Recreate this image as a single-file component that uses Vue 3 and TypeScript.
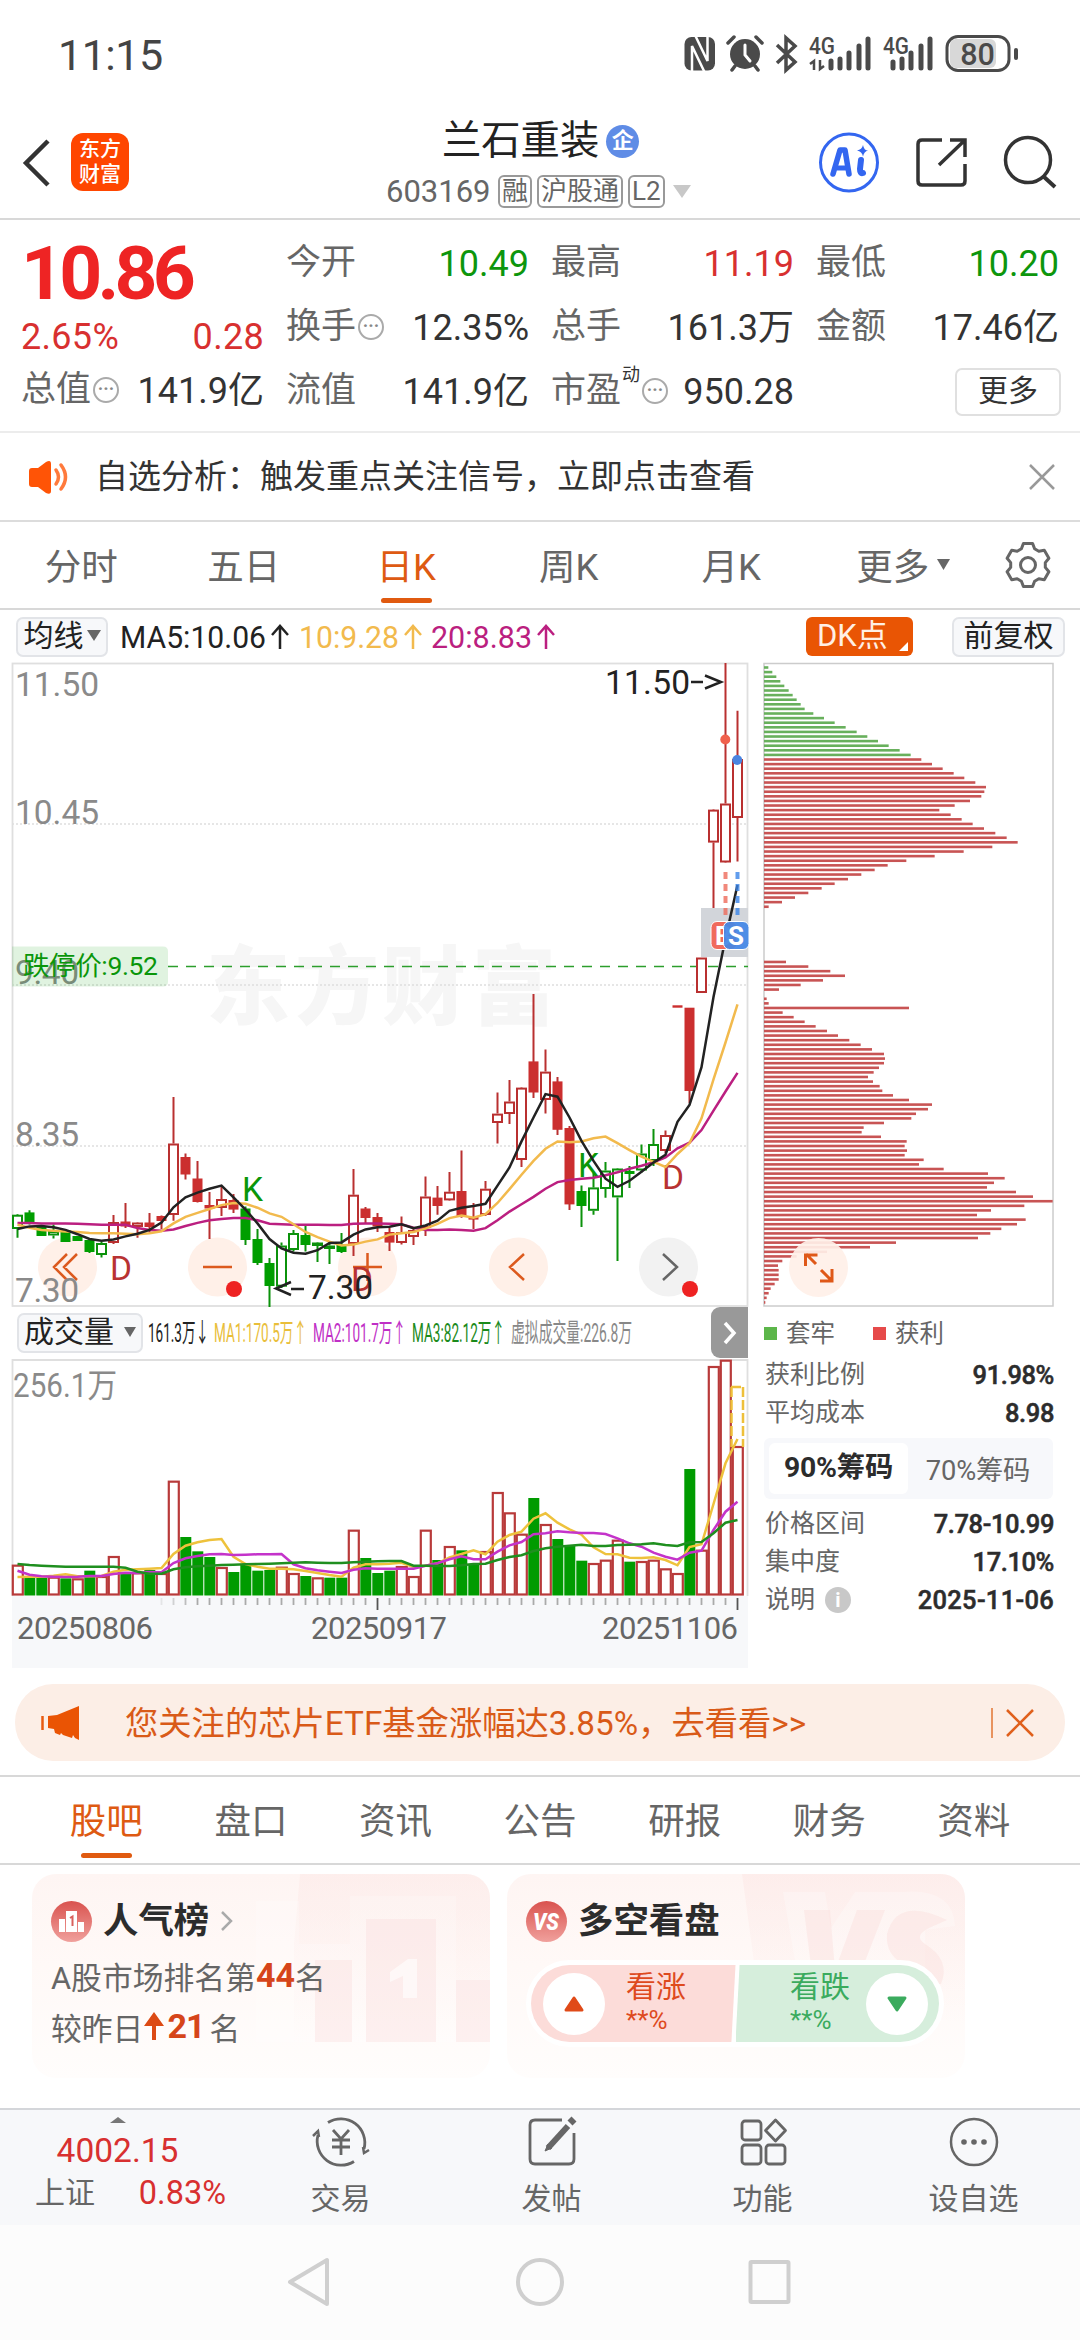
<script setup lang="ts">
type Candle = [number, number, number, number, string]

const pitch = 12
const cx = (i: number): number => 17.5 + i * pitch

// [high, body top, body bottom, low, style] — r/g colour, h hollow, f filled
const candles: Candle[] = [
  [1214, 1214.7, 1229, 1237.7, 'gh'], [1210.3, 1213.4, 1222.5, 1224.6, 'gf'], [1226, 1227, 1235, 1236, 'gf'],
  [1224.6, 1231, 1235.5, 1238.5, 'gh'], [1230, 1231, 1241, 1242, 'gf'], [1236, 1237, 1240, 1241, 'gf'],
  [1240, 1241, 1251, 1253, 'gf'], [1242, 1243, 1255, 1257.6, 'gh'], [1215, 1222, 1243, 1244, 'rh'],
  [1203, 1222.5, 1225.5, 1228, 'rf'], [1222, 1222.5, 1227, 1237.7, 'rh'], [1213, 1223.5, 1226, 1232.5, 'rf'],
  [1215.5, 1217, 1220, 1229, 'rf'], [1097, 1143.5, 1215, 1220.7, 'rh'], [1153.5, 1158, 1173.5, 1179.5, 'rf'],
  [1161, 1179.5, 1201, 1202.5, 'rf'], [1192, 1206, 1207.5, 1239, 'rf'], [1187, 1199, 1208, 1216, 'rh'],
  [1194, 1201, 1208.6, 1213, 'rf'], [1206.4, 1209.5, 1239, 1245, 'gf'], [1229, 1240, 1262, 1265, 'gf'],
  [1258, 1264, 1285, 1307, 'gf'], [1242.4, 1245.5, 1286.7, 1288, 'gh'], [1230, 1233, 1250, 1251.5, 'gh'],
  [1226, 1236, 1244, 1251.5, 'gf'], [1242, 1242.5, 1246, 1262, 'gh'], [1242, 1245.5, 1249, 1264, 'gh'],
  [1233, 1245.5, 1251, 1253, 'gf'], [1169, 1194.7, 1244, 1256, 'rh'], [1207, 1209.5, 1217, 1223, 'rf'],
  [1213, 1218, 1225.5, 1232, 'rf'], [1227.7, 1233, 1241.6, 1251, 'rf'], [1216.4, 1232, 1243, 1244.6, 'rh'],
  [1228, 1230, 1237, 1245, 'rh'], [1176.5, 1196.5, 1228, 1236, 'rh'], [1186, 1198.6, 1205, 1214.7, 'rf'],
  [1172, 1191.7, 1200.4, 1201, 'rh'], [1150.5, 1192, 1215, 1217.7, 'rf'], [1203, 1217.8, 1218.6, 1229, 'rf'],
  [1181, 1188.7, 1215, 1216, 'rh'], [1092.4, 1113.6, 1123, 1143.5, 'rh'], [1080, 1101.5, 1114, 1124, 'rh'],
  [1087, 1087.6, 1160, 1167, 'rh'], [994, 1062.4, 1091.5, 1098, 'rf'], [1049.4, 1071.6, 1100, 1113.6, 'rh'],
  [1077, 1082.4, 1128.8, 1135, 'rf'], [1126, 1129, 1203.4, 1210, 'rf'], [1185.6, 1192, 1205, 1227, 'gf'],
  [1172.6, 1187.4, 1210.8, 1214.7, 'gh'], [1162, 1170.5, 1189, 1197.8, 'gh'], [1168, 1168.5, 1197.4, 1261, 'gh'],
  [1166, 1172, 1173, 1188, 'gf'], [1144.5, 1153.5, 1170.5, 1172.6, 'gh'], [1129, 1144, 1161, 1166, 'gh'],
  [1130.5, 1135, 1151, 1153, 'rh'], [1006.5, 1006.3, 1006.7, 1006.5, 'rf'], [1008, 1008.7, 1090, 1103, 'rf'],
  [957.5, 957.5, 993, 993, 'rh'], [809, 809.6, 842.6, 908, 'rh'], [663, 803.5, 862.5, 863, 'rh'],
  [710.7, 759, 818, 861.6, 'rh'],
]

const priceY = (v: number): number => 650 + v * 0.4337
const volY = (v: number): number => 1300 + v / 3
const line = (values: number[], scale: (v: number) => number): string =>
  values.map((v, i) => `${cx(i)},${scale(v).toFixed(1)}`).join(' ')

const ma5 = [1335, 1329, 1328, 1331, 1337, 1347, 1358, 1362, 1359, 1352, 1346, 1337, 1320, 1285, 1262, 1251, 1242, 1235, 1262, 1290, 1322, 1358, 1380, 1390, 1392, 1384, 1367, 1366, 1348, 1336, 1331, 1330, 1324, 1333, 1327, 1316, 1293, 1286, 1282, 1277, 1235, 1193, 1133, 1078, 1024, 1030, 1078, 1132, 1178, 1219, 1238, 1224, 1203, 1182, 1164, 1088, 1049, 962, 800, 665, 542]
const ma10 = [1325, 1332, 1337, 1339, 1341, 1342, 1344, 1345, 1345, 1346, 1347, 1345, 1340, 1322, 1307, 1298, 1289, 1280, 1275, 1277, 1286, 1299, 1307, 1324, 1342, 1354, 1364, 1373, 1371, 1364, 1359, 1348, 1345, 1342, 1334, 1323, 1310, 1304, 1309, 1301, 1275, 1243, 1210, 1178, 1150, 1133, 1135, 1133, 1126, 1122, 1137, 1153, 1168, 1180, 1192, 1162, 1137, 1080, 990, 905, 817]
const ma20 = [1321, 1321, 1322, 1322, 1322, 1323, 1324, 1325, 1325, 1325, 1333, 1337, 1339, 1336, 1328, 1321, 1315, 1312, 1310, 1310, 1315, 1323, 1324, 1325, 1325, 1325, 1326, 1326, 1323, 1322, 1322, 1323, 1324, 1332, 1337, 1337, 1336, 1337, 1339, 1333, 1315, 1295, 1278, 1261, 1242, 1227, 1222, 1219, 1217, 1211, 1204, 1196, 1189, 1181, 1170, 1149, 1136, 1107, 1062, 1018, 975]

const volumeTops = [797, 830, 833, 833, 835, 838, 812, 831, 771, 822, 820, 810, 822, 545, 711, 754, 771, 804, 816, 792, 812, 810, 803, 822, 828, 835, 833, 833, 692, 774, 819, 812, 801, 831, 692, 780, 741, 751, 792, 756, 579, 640, 704, 594, 675, 717, 737, 782, 792, 782, 722, 785, 786, 782, 808, 822, 507, 752, 201, 182, 441]
const volumeSides = 'rggrgrgrrgrgrrgggrggggrrgrggrgggrrrgrggrrrrgrgggrrrgrrrrgrrrr'
const volumes = volumeTops.map((v, i) => ({ x: cx(i), y: volY(v), up: volumeSides[i] === 'r' }))
const vma1 = [831, 830, 830, 827, 823, 829, 829, 828, 815, 809, 808, 806, 804, 762, 737, 727, 720, 717, 770, 792, 800, 806, 806, 808, 813, 819, 825, 830, 803, 793, 793, 791, 788, 801, 797, 790, 772, 762, 751, 763, 725, 705, 695, 656, 640, 668, 688, 704, 742, 762, 763, 773, 774, 772, 780, 796, 741, 733, 612, 490, 417]
const vma2 = [812, 824, 829, 830, 831, 830, 828, 828, 822, 818, 819, 816, 817, 789, 775, 768, 763, 762, 765, 764, 763, 763, 762, 793, 805, 811, 815, 819, 809, 805, 806, 806, 806, 806, 797, 790, 778, 769, 778, 778, 755, 736, 726, 703, 700, 694, 697, 699, 699, 702, 715, 730, 740, 758, 770, 779, 758, 752, 690, 635, 605]
const vma3 = [792, 795, 797, 799, 800, 800, 800, 800, 800, 803, 815, 821, 821, 808, 802, 799, 797, 795, 794, 793, 792, 791, 790, 788, 787, 788, 789, 789, 787, 785, 784, 783, 783, 797, 797, 798, 798, 796, 792, 791, 780, 771, 766, 753, 745, 740, 737, 734, 738, 738, 735, 734, 733, 730, 735, 738, 727, 726, 700, 668, 660]
const ticks = Array.from({ length: 49 }, (_, k) => k + 12)

// cost distribution, top price first; the first 20 levels are trapped positions
const chipEnds = [
  55, 67, 79, 91, 103, 116, 128, 140, 152, 164, 190, 222, 254, 287, 320, 352, 384, 416, 449, 482,
  514, 546, 578, 611, 643, 676, 708, 703, 694, 660, 614, 568, 602, 635, 668, 702, 736, 770, 803, 727, 641, 554, 469, 413, 374, 334, 294, 254, 215, 175, 135, 96, 56,
  0, 0, 0, 0, 0, 0, 0, 0, 0, 0, 0, 108, 175, 241, 285, 219, 152, 87, 0, 50, 56, 477, 98, 131, 164, 197, 231, 264, 298, 332, 366,
  402, 405, 402, 387, 371, 354, 369, 389, 397, 429, 477, 546, 534, 498, 484, 402, 341, 335, 393, 470, 464, 471, 464, 521, 507, 581, 714, 764, 732, 711,
  798, 849, 908, 823, 723, 681, 827, 801, 754, 721, 684, 438, 360, 231, 140, 97, 84, 86, 86, 86, 74, 62, 56, 50, 46,
]
const chips = chipEnds
  .map((v, i) => ({ w: (v - 42) / 3, y: 666.2 + i * 4.601, free: i >= 20 }))
  .filter((c) => c.w > 0)

const gear = (() => {
  const pts: string[] = []
  for (let t = 0; t < 6; t++) {
    const spec: [number, number][] = [[-22, 17.5], [-12, 22], [12, 22], [22, 17.5]]
    for (const [d, r] of spec) {
      const a = ((t * 60 + d - 90) * Math.PI) / 180
      pts.push(`${(r * Math.cos(a)).toFixed(1)},${(r * Math.sin(a)).toFixed(1)}`)
    }
  }
  return pts.join(' ')
})()

const periods = ['分时', '五日', '日K', '周K', '月K']
const sections = ['股吧', '盘口', '资讯', '公告', '研报', '财务', '资料']
const priceLabels: [string, number][] = [['11.50', 695.5], ['10.45', 824], ['9.40', 984], ['8.35', 1145.5], ['7.30', 1302]]
const volLegend = [
  { t: '161.3万↓', x: 148, w: 61, c: '#222' },
  { t: 'MA1:170.5万↑', x: 214, w: 93, c: '#e9be3a' },
  { t: 'MA2:101.7万↑', x: 313, w: 93, c: '#c02fc6' },
  { t: 'MA3:82.12万↑', x: 412, w: 93, c: '#1b8a1b' },
  { t: '虚拟成交量:226.8万', x: 511, w: 121, c: '#888' },
]
</script>

<template>
  <div class="screen">
    <header class="status">
      <span class="clock">11:15</span>
      <svg class="status-icons" viewBox="680 30 340 46" width="340" height="46">
        <rect x="684.500" y="37" width="30.500" height="33.500" rx="7" fill="#4a4a4a" />
        <path d="M692 72V46l12.500 26M707.500 35v26L695 35" fill="none" stroke="#fff" stroke-width="2.500" />
        <circle cx="745" cy="54" r="15" fill="#4a4a4a" />
        <path d="M728 43l6-6M762 43l-6-6M735 66l-3 4M755 66l3 4" stroke="#4a4a4a" stroke-width="3.500" stroke-linecap="round" />
        <path d="M745 45v10l5 6" fill="none" stroke="#fff" stroke-width="3" stroke-linecap="round" />
        <path d="M777 45l18 17-9 8V38l9 8-18 17" fill="none" stroke="#4a4a4a" stroke-width="3.500" />
        <text x="809" y="54" font-size="23" font-weight="500" textLength="26" lengthAdjust="spacingAndGlyphs">4G</text>
        <text x="883" y="54" font-size="23" font-weight="500" textLength="26" lengthAdjust="spacingAndGlyphs">4G</text>
        <path d="M814 70v-9l-4 3M820 60v9l4-3" fill="none" stroke="#4a4a4a" stroke-width="2.500" />
        <path d="M831 68v-7M840 68V59M849 68V53M859 68V46M868 68V39M893 68v-6M902 68V59M911 68V53M921 68V46M930 68V39" stroke="#4a4a4a" stroke-width="5" stroke-linecap="round" />
        <rect x="950" y="39" width="46" height="29" rx="6" fill="#d8d8d8" />
        <rect x="947" y="36.500" width="62" height="34" rx="11" fill="none" stroke="#4a4a4a" stroke-width="3" />
        <text x="977.500" y="64.500" font-size="30.500" font-weight="500" text-anchor="middle">80</text>
        <path d="M1016 50v8" stroke="#4a4a4a" stroke-width="4" stroke-linecap="round" />
      </svg>
    </header>

    <section class="titlebar">
      <svg class="back" viewBox="0 0 28 48" width="28" height="48"><path d="M26 2L4 24l22 22" fill="none" stroke="#333" stroke-width="4.500" /></svg>
      <div class="logo"><span>东方</span><span>财富</span></div>
      <div class="title">
        <div class="name">兰石重装<span class="badge">企</span></div>
        <div class="code">
          <span class="num">603169</span><i>融</i><i>沪股通</i><i>L2</i>
          <svg width="18" height="13" viewBox="0 0 18 13"><path d="M0 0h18l-9 13z" fill="#c8c8c8" /></svg>
        </div>
      </div>
      <svg class="tools" viewBox="816 128 248 70" width="248" height="70">
        <circle cx="849" cy="162.500" r="28.500" fill="none" stroke="#3366f0" stroke-width="3" />
        <path d="M833 174l7-24h5l4 24" fill="none" stroke="#3366f0" stroke-width="5.500" stroke-linejoin="round" stroke-linecap="round" />
        <path d="M837 168h9" stroke="#3366f0" stroke-width="5" />
        <path d="M861 160l-1 9q0 5 3 4" fill="none" stroke="#3366f0" stroke-width="6" stroke-linecap="round" />
        <path d="M863 145q1 5.500 5 5.500-4 1-5 6-1-5-6-6 5-1 6-5.500z" fill="#3366f0" />
        <path d="M942 140h-20q-4 0-4 4v37q0 4 4 4h39q4 0 4-4v-17M950 140h15v17M965 140l-26 25" fill="none" stroke="#333" stroke-width="3.500" />
        <circle cx="1028" cy="160" r="22.500" fill="none" stroke="#333" stroke-width="3.500" />
        <path d="M1043 176l12 11" stroke="#333" stroke-width="4" />
      </svg>
    </section>

    <section class="quote">
      <div class="last">
        <b>10.86</b>
        <div class="pair red"><span>2.65%</span><span>0.28</span></div>
        <div class="cell"><label>总值</label><em>···</em><span>141.9亿</span></div>
      </div>
      <div class="col">
        <div class="cell"><label>今开</label><span class="green">10.49</span></div>
        <div class="cell"><label>换手</label><em>···</em><span>12.35%</span></div>
        <div class="cell"><label>流值</label><span>141.9亿</span></div>
      </div>
      <div class="col">
        <div class="cell"><label>最高</label><span class="red">11.19</span></div>
        <div class="cell"><label>总手</label><span>161.3万</span></div>
        <div class="cell"><label>市盈</label><sup>动</sup><em>···</em><span>950.28</span></div>
      </div>
      <div class="col">
        <div class="cell"><label>最低</label><span class="green">10.20</span></div>
        <div class="cell"><label>金额</label><span>17.46亿</span></div>
        <div class="cell"><button class="more">更多</button></div>
      </div>
    </section>

    <section class="notice">
      <svg width="40" height="34" viewBox="0 0 40 34">
        <path d="M0 11q0-3 3-3h6l8-6q5-3 5 2v27q0 4-5 2l-8-6H3q-3 0-3-3z" fill="#ff5406" />
        <path d="M27 10q5 7 0 14M32 5q9 12 0 24" fill="none" stroke="#ff7a3c" stroke-width="3.500" stroke-linecap="round" />
      </svg>
      <span>自选分析：触发重点关注信号，立即点击查看</span>
      <svg width="26" height="26" viewBox="0 0 26 26"><path d="M1 1l24 24M25 1L1 25" stroke="#999" stroke-width="2.500" /></svg>
    </section>

    <nav class="periods">
      <div v-for="p in periods" :key="p" class="tab" :class="{ on: p === '日K' }">{{ p }}</div>
      <div class="tab all">更多<svg width="13" height="11" viewBox="0 0 13 11"><path d="M0 0h13L6.500 11z" fill="#666" /></svg></div>
      <svg class="gear" viewBox="-24 -24 48 48" width="48" height="48">
        <polygon :points="gear" fill="none" stroke="#666" stroke-width="3" stroke-linejoin="round" />
        <circle r="7.500" fill="none" stroke="#666" stroke-width="3" />
      </svg>
    </nav>

    <section class="mabar">
      <div class="chipbtn">均线<svg width="14" height="11" viewBox="0 0 14 11"><path d="M0 0h14L7 11z" fill="#666" /></svg></div>
      <svg class="malegend" viewBox="118 612 445 48" width="445" height="48">
        <g font-size="31">
          <text x="120" y="646.500" fill="#222" textLength="146" lengthAdjust="spacingAndGlyphs">MA5:10.06</text>
          <text x="299" y="646.500" fill="#f2ba4d" textLength="100" lengthAdjust="spacingAndGlyphs">10:9.28</text>
          <text x="431" y="646.500" fill="#bb1f80" textLength="101" lengthAdjust="spacingAndGlyphs">20:8.83</text>
        </g>
        <g fill="none" stroke-width="2.500">
          <path d="M280 648v-23M272 634l8-9 8 9" stroke="#222" />
          <path d="M413 648v-23M405 634l8-9 8 9" stroke="#f2ba4d" />
          <path d="M546 648v-23M538 634l8-9 8 9" stroke="#bb1f80" />
        </g>
      </svg>
      <div class="dk">DK点<i></i></div>
      <div class="chipbtn adj">前复权</div>
    </section>

    <section class="charts">
      <div class="left">
        <svg class="pane" viewBox="12 663 736 643" width="736" height="643">
          <g class="wm" font-size="86" font-weight="900">
            <text x="206" y="1018" textLength="84" lengthAdjust="spacingAndGlyphs">东</text>
            <text x="295" y="1018" textLength="84" lengthAdjust="spacingAndGlyphs">方</text>
            <text x="382" y="1018" textLength="84" lengthAdjust="spacingAndGlyphs">财</text>
            <text x="472" y="1018" textLength="84" lengthAdjust="spacingAndGlyphs">富</text>
          </g>
          <path d="M12 824h736M12 985h736M12 1146h736" stroke="#dedede" stroke-width="1.500" stroke-dasharray="2 2" />
          <rect x="12.500" y="663.500" width="735" height="642.500" fill="none" stroke="#dfdfdf" stroke-width="1.800" />
          <g v-for="b in [67.5, 217.5, 367.5, 518.5]" :key="b"><circle :cx="b" cy="1267" r="29.500" fill="#fff0e8" /></g>
          <circle cx="668.500" cy="1267" r="29.500" fill="#f2f2f2" />
          <g fill="none" stroke="#dc5a1e" stroke-width="2.500">
            <path d="M67 1254l-13 13 13 13M77 1254l-13 13 13 13M203 1267h29M353 1267h29M367.500 1253v28M524 1254l-14 13 14 13" />
            <path d="M663 1254l14 13-14 13" stroke="#666" />
          </g>
          <g font-size="33.500" fill="#8a8a8a">
            <text v-for="l in priceLabels" :key="l[0]" x="15" :y="l[1]" :textLength="l[0].length > 4 ? 84 : 64">{{ l[0] }}</text>
          </g>
          <path d="M12 946.500h151q5 0 5 5v30q0 5-5 5H12z" fill="#00a000" fill-opacity=".12" />
          <text x="23" y="975" font-size="26.500" fill="#0a960a" textLength="135">跌停价:9.52</text>
          <path d="M168 966.500h580" stroke="#2c9e2c" stroke-width="1.500" stroke-dasharray="10 8" />
          <rect x="701" y="908" width="47" height="49" fill="#d2d5da" />
          <g v-for="(c, i) in candles" :key="i" :class="c[4][0] === 'r' ? 'up' : 'down'">
            <path :d="`M${cx(i)} ${c[0]}V${c[1]}M${cx(i)} ${c[2]}V${c[3]}`" />
            <rect v-if="c[4][1] === 'h'" :x="cx(i) - 4.5" :y="c[1] + 1" width="9" :height="Math.max(c[2] - c[1] - 2, 1)" fill="#fff" />
            <rect v-else class="solid" :x="cx(i) - 4" :y="c[1]" width="8" :height="c[2] - c[1]" />
          </g>
          <g font-size="33.500">
            <text x="242" y="1201" fill="#0a960a">K</text>
            <text x="578" y="1176.500" fill="#0a960a">K</text>
            <text x="110" y="1280" fill="#b83232">D</text>
            <text x="662" y="1189" fill="#b83232">D</text>
            <text x="351" y="1291" fill="#b83232">D</text>
            <text x="605" y="694" fill="#222" textLength="85">11.50</text>
            <text x="308" y="1299" fill="#222" textLength="65">7.30</text>
          </g>
          <path d="M691 682h12M705 675.500l16 6.500-16 6.500M291 1289h13M291 1282l-15 6.500 15 6.500" fill="none" stroke="#222" stroke-width="2.500" />
          <polyline :points="line(ma20, priceY)" fill="none" stroke="#bb1f80" stroke-width="2.500" />
          <polyline :points="line(ma10, priceY)" fill="none" stroke="#f2ba4d" stroke-width="2.500" />
          <polyline :points="line(ma5, priceY)" fill="none" stroke="#222" stroke-width="2.500" />
          <path d="M725.500 872v44" stroke="#ee6a5a" stroke-opacity=".8" stroke-width="4" stroke-dasharray="7 5" />
          <path d="M737.500 872v44" stroke="#3a84e8" stroke-opacity=".8" stroke-width="4" stroke-dasharray="7 5" />
          <circle cx="725.300" cy="739.500" r="5" fill="#f0604c" />
          <circle cx="737.200" cy="760" r="5" fill="#4a84e0" />
          <rect x="711" y="921.500" width="26" height="28" rx="6" fill="#f06a5c" stroke="#fff" stroke-width="1" />
          <text x="715" y="945" font-size="26" font-weight="700" fill="#fff">B</text>
          <rect x="723.500" y="921.500" width="25.500" height="28" rx="6" fill="#4488e6" fill-opacity=".93" stroke="#fff" stroke-width="1" />
          <text x="728" y="945" font-size="26" font-weight="700" fill="#fff">S</text>
          <circle cx="234" cy="1289" r="8" fill="#ee2222" />
          <circle cx="690" cy="1289" r="8" fill="#ee2222" />
        </svg>

        <div class="volhead">
          <div class="chipbtn vol">成交量<svg width="12" height="10" viewBox="0 0 12 10"><path d="M0 0h12L6 10z" fill="#666" /></svg></div>
          <svg viewBox="145 1312 490 44" width="490" height="44">
            <text v-for="l in volLegend" :key="l.t" :x="l.x" y="1343" :fill="l.c" font-size="26" :textLength="l.w" lengthAdjust="spacingAndGlyphs">{{ l.t }}</text>
          </svg>
          <div class="next"><svg width="14" height="24" viewBox="0 0 14 24"><path d="M2 2l9 10-9 10" fill="none" stroke="#fff" stroke-width="3.500" /></svg></div>
        </div>

        <svg class="pane" viewBox="12 1359 736 309" width="736" height="309">
          <rect x="12" y="1596" width="736" height="72" fill="#f7f8fa" />
          <path d="M12.500 1596V1360h735v236" fill="none" stroke="#dfdfdf" stroke-width="1.800" />
          <text x="13" y="1397" font-size="33.500" fill="#8a8a8a" textLength="104" lengthAdjust="spacingAndGlyphs">256.1万</text>
          <g v-for="(v, i) in volumes" :key="i">
            <rect v-if="v.up" :x="v.x - 4.7" :y="v.y" width="10" :height="1594.5 - v.y" fill="#fff" stroke="#b83a3a" stroke-width="2.200" />
            <rect v-else :x="v.x - 5.2" :y="v.y" width="11" :height="1595.5 - v.y" fill="#009b00" />
          </g>
          <path d="M731.500 1387v60M743 1387v60M731 1387h13" fill="none" stroke="#eec03a" stroke-width="2.500" stroke-dasharray="10 3" />
          <polyline :points="line(vma1, volY)" fill="none" stroke="#eec23c" stroke-width="2.500" />
          <polyline :points="line(vma2, volY)" fill="none" stroke="#c433ca" stroke-width="2.500" />
          <polyline :points="line(vma3, volY)" fill="none" stroke="#1f8f1f" stroke-width="2.500" />
          <path v-for="t in ticks" :key="t" :d="`M${cx(t)} 1598v${t % 30 ? 7 : 12}`" :stroke="t % 30 ? '#aaa' : '#555'" :stroke-opacity="t < 15 ? (t - 11) * 0.25 : 1" stroke-width="1.800" />
          <g font-size="31" fill="#666">
            <text x="17" y="1639" textLength="136">20250806</text>
            <text x="311" y="1639" textLength="136">20250917</text>
            <text x="602" y="1639" textLength="136">20251106</text>
          </g>
        </svg>
      </div>

      <aside class="right">
        <svg class="pane" viewBox="763 663 292 643" width="292" height="643">
          <rect x="764" y="663.500" width="289" height="642.500" fill="none" stroke="#ccc" stroke-width="1.500" />
          <rect v-for="c in chips" :key="c.y" x="764" :y="c.y" :width="c.w" height="2.600" :fill="c.free ? '#c85454' : '#68b05c'" />
          <circle cx="818.500" cy="1267.500" r="29.500" fill="#fff0e8" fill-opacity=".92" />
          <path d="M816 1264l-10-10M805.500 1266v-11h12M821 1270l10 10M832 1269v12h-12" fill="none" stroke="#df5818" stroke-width="3" />
        </svg>
        <div class="legend"><i class="g"></i><span>套牢</span><i class="r"></i><span>获利</span></div>
        <div class="info"><span>获利比例</span><b>91.98%</b></div>
        <div class="info"><span>平均成本</span><b>8.98</b></div>
        <div class="seg"><b>90%筹码</b><span>70%筹码</span></div>
        <div class="info"><span>价格区间</span><b>7.78-10.99</b></div>
        <div class="info"><span>集中度</span><b>17.10%</b></div>
        <div class="info"><span>说明<i>i</i></span><b class="date">2025-11-06</b></div>
      </aside>
    </section>

    <div class="banner">
      <svg width="40" height="34" viewBox="0 0 40 34"><path d="M1.500 10v14" stroke="#e85a10" stroke-width="2.500" /><path d="M7 10l9-1L38 0v34l-4-2-2-3-1 3-9-3-2-2-1 2-5-2-1-4-6-1z" fill="#ea5404" /></svg>
      <span>您关注的芯片ETF基金涨幅达3.85%，去看看&gt;&gt;</span>
      <i></i>
      <svg width="28" height="28" viewBox="0 0 28 28"><path d="M1 1l26 26M27 1L1 27" stroke="#e0601c" stroke-width="2.500" /></svg>
    </div>

    <nav class="sections">
      <div v-for="s in sections" :key="s" class="tab" :class="{ on: s === '股吧' }">{{ s }}</div>
    </nav>

    <section class="cards">
      <article class="card">
        <svg class="deco" viewBox="0 0 458 204" width="458" height="204">
          <defs><linearGradient id="veil" x2="0" y2="1"><stop stop-color="#fce4e2" /><stop offset="1" stop-color="#fce4e2" stop-opacity="0" /></linearGradient></defs>
          <path d="M268 0h190v168H262V70z" fill="url(#veil)" fill-opacity=".4" />
          <path d="M224 27h43v43h31v98h-74zM318 22h106v84h34v62H298V70h20z" fill="#fff" fill-opacity=".22" />
          <path d="M283 86h37v82h-37zM334 45h70v123h-70zM424 106h34v62h-34z" fill="#f9dcda" fill-opacity=".36" />
          <path d="M358 98l18-13h9v39h-14v-22l-13 6z" fill="#fff" fill-opacity=".6" />
        </svg>
        <h3>
          <svg width="41" height="41" viewBox="0 0 41 41">
            <defs><linearGradient id="ic" x2="0" y2="1"><stop stop-color="#d9534f" /><stop offset="1" stop-color="#f0a09c" /></linearGradient></defs>
            <circle cx="20.500" cy="20.500" r="20.500" fill="url(#ic)" />
            <path d="M8 18h6v13H8zM15 10h11v21H15zM27 21h6v10h-6z" fill="#fff" /><path d="M19 17l2.500-1.500V25" fill="none" stroke="#d9605c" stroke-width="2" />
          </svg>人气榜
          <svg class="chev" width="12" height="20" viewBox="0 0 12 20"><path d="M1 1l9 9-9 9" fill="none" stroke="#aaa" stroke-width="2.500" /></svg>
        </h3>
        <p>A股市场排名第<b>44</b>名</p>
        <p class="second">较昨日<svg width="20" height="28" viewBox="0 0 20 28"><path d="M10 0l10 14h-8v14H8V14H0z" fill="#dc4a14" /></svg><b class="gap">21</b>名</p>
      </article>
      <article class="card vs">
        <svg class="deco" viewBox="0 0 458 204" width="458" height="204">
          <path d="M235 0h223v150L250 110z" fill="url(#veil)" fill-opacity=".45" />
          <path d="M276 18h42l6 36 24-36h48q50-4 52 34l-30 4v100H300z" fill="#fff" fill-opacity=".28" />
          <path d="M297 36h26l5 60 22-60h28l-28 72h-44zM440 46q-50-24-60 14-2 22 20 32 12 8 6 18h28q10-24-16-40-12-8 4-16z" fill="#f9dcda" fill-opacity=".4" />
        </svg>
        <h3>
          <svg width="41" height="41" viewBox="0 0 41 41"><circle cx="20.500" cy="20.500" r="20.500" fill="url(#ic)" /><text x="20" y="29" font-size="23" font-weight="900" font-style="italic" fill="#fff" text-anchor="middle" textLength="26" lengthAdjust="spacingAndGlyphs">VS</text></svg>多空看盘
        </h3>
        <div class="pill">
          <div class="half bull"><i><svg width="20" height="16" viewBox="0 0 20 16"><path d="M10 2l8 12H2z" fill="#e04a18" stroke="#e04a18" stroke-width="3" stroke-linejoin="round" /></svg></i><div><span>看涨</span><small>**%</small></div></div>
          <div class="half bear"><div><span>看跌</span><small>**%</small></div><i><svg width="20" height="16" viewBox="0 0 20 16"><path d="M10 14L18 2H2z" fill="#3bab5e" stroke="#3bab5e" stroke-width="3" stroke-linejoin="round" /></svg></i></div>
        </div>
      </article>
    </section>

    <footer class="dock">
      <div class="index">
        <svg width="16" height="6" viewBox="0 0 16 6"><path d="M8 0l8 6H0z" fill="#777" /></svg>
        <strong>4002.15</strong>
        <div><span>上证</span><em>0.83%</em></div>
      </div>
      <div class="item">
        <svg viewBox="-28 -26 56 52" width="56" height="52" fill="none" stroke="#666" stroke-width="2.800">
          <path d="M-13-19.500A24 24 0 0 1 23 7M13 19.500A24 24 0 0 1-23-7" /><path d="M-28-6l5-5 1 6M28 8l-5 3-1-6" stroke-width="2.500" />
          <path d="M-8-12l8 9 8-9M0-3v16M-9-2H9M-9 5H9" />
        </svg>交易
      </div>
      <div class="item">
        <svg viewBox="-26 -26 52 52" width="52" height="52" fill="none" stroke="#666" stroke-width="2.800">
          <path d="M10-22h-27q-5 0-5 5v34q0 5 5 5h34q5 0 5-5V-9" /><path d="M-4 6L16-16" stroke-width="6" /><path d="M-7 9l7-3-4-4z" fill="#666" stroke-width="1" /><path d="M18-19l4-4" stroke-width="7" />
        </svg>发帖
      </div>
      <div class="item">
        <svg viewBox="-26 -26 52 52" width="52" height="52" fill="none" stroke="#666" stroke-width="2.800">
          <rect x="-21" y="-21" width="19" height="19" rx="3" /><rect x="-21" y="3" width="19" height="19" rx="3" /><rect x="3" y="3" width="19" height="19" rx="3" /><path d="M12.500-22L22.500-11.500 12.500-1 2.500-11.500z" stroke-linejoin="round" />
        </svg>功能
      </div>
      <div class="item">
        <svg viewBox="-26 -26 52 52" width="52" height="52"><circle r="23" fill="none" stroke="#666" stroke-width="2.500" /><g fill="#666"><circle cx="-10" r="2.800" /><circle r="2.800" /><circle cx="10" r="2.800" /></g></svg>设自选
      </div>
    </footer>

    <div class="sysnav">
      <svg viewBox="280 2250 520 64" width="520" height="64" fill="none" stroke="#cfcfcf" stroke-width="4" stroke-linejoin="round">
        <path d="M327 2260v44l-37-22z" /><circle cx="540" cy="2282" r="22" /><rect x="750.500" y="2262" width="38" height="40" rx="1" />
      </svg>
    </div>
  </div>
</template>

<style>
body { margin: 0; background: #fff; }
</style>

<style scoped>
.screen { width: 1080px; height: 2340px; overflow: hidden; background: #fff; color: #333; font-family: Roboto, "Noto Sans CJK SC", sans-serif; display: flex; flex-direction: column; }
.screen * { box-sizing: border-box; }
.screen > * { flex: none; }
svg { display: block; flex: none; overflow: visible; }
svg text { font-family: Roboto, "Noto Sans CJK SC", sans-serif; }
.red { color: #d83030 !important; }
.green { color: #0d960d !important; }

.status { height: 110px; display: flex; justify-content: space-between; padding: 30px 60px 0 58px; }
.clock { font-size: 43px; line-height: 50px; letter-spacing: -.5px; color: #444; }
.status-icons text { fill: #4a4a4a; }

.titlebar { height: 110px; display: flex; align-items: flex-start; border-bottom: 2px solid #d8d8d8; }
.back { margin: 29px 0 0 22px; }
.logo { margin: 23px 0 0 21px; width: 58px; height: 58px; border-radius: 12px; background: #ff4600; color: #fff; font-size: 21px; font-weight: 500; line-height: 25px; display: flex; flex-direction: column; align-items: center; justify-content: center; }
.title { width: 420px; margin-left: 194px; display: flex; flex-direction: column; }
.name { display: flex; align-items: center; padding-left: 119px; margin-top: 5px; font-size: 39.3px; line-height: 52px; color: #222; white-space: nowrap; }
.badge { width: 33px; height: 33px; border-radius: 50%; background: #5f8ce6; color: #fff; font-size: 22px; line-height: 31px; text-align: center; font-weight: 700; margin-left: 7px; }
.code { display: flex; align-items: center; padding-left: 63px; height: 34px; margin-top: 7px; font-size: 31px; color: #666; }
.code .num { width: 112px; }
.code i { font-style: normal; font-size: 26px; line-height: 28px; height: 33px; border: 2px solid #999; border-radius: 6px; padding: 0 2px; margin-right: 5px; }
.code svg { margin-left: 3px; }
.tools { margin: 18px 0 0 73px; }

.quote { height: 213px; display: flex; gap: 22px; padding: 12px 21px 0 21px; border-bottom: 2px solid #ececec; }
.last, .col { width: 243px; display: flex; flex-direction: column; }
.last b { font-size: 75px; line-height: 84px; font-weight: 700; color: #ee2424; letter-spacing: -4.8px; height: 84px; margin-top: -1px; }
.pair { display: flex; justify-content: space-between; font-size: 36px; line-height: 44px; height: 44px; letter-spacing: .3px; }
.cell { height: 64px; display: flex; align-items: center; font-size: 36px; line-height: 48px; color: #333; white-space: nowrap; }
.cell label { font-size: 35px; color: #666; padding-bottom: 2px; }
.cell span { margin-left: auto; }
.cell em { width: 26px; height: 26px; border: 2px solid #aaa; border-radius: 50%; font-style: normal; font-size: 18px; line-height: 20px; text-align: center; color: #888; margin: 0 0 3px 2px; font-weight: 700; }
.cell sup { font-size: 18px; line-height: 20px; padding-bottom: 34px; margin: 0 0 0 1px; }
.more { margin: 0 -2px 0 auto; width: 106px; height: 48px; border: 2px solid #e0e0e0; border-radius: 7px; background: #fff; font: 30px Roboto, "Noto Sans CJK SC", sans-serif; color: #333; padding: 0 0 3px; line-height: 40px; }

.notice { height: 89px; border-bottom: 2px solid #dcdcdc; display: flex; align-items: center; padding: 0 25px 0 29px; font-size: 33px; }
.notice span { flex: 1; margin-left: 26px; padding-bottom: 5px; }

.periods { height: 88px; border-bottom: 2px solid #d8d8d8; display: flex; align-items: center; }
.tab { position: relative; height: 100%; display: flex; align-items: center; justify-content: center; font-size: 36.5px; color: #666; }
.periods .tab { width: 162.5px; padding-bottom: 2px; }
.tab.on { color: #de5a12; }
.tab.on::after { content: ""; position: absolute; bottom: 5px; width: 51px; height: 5px; border-radius: 3px; background: #e05a10; }
.periods .all { padding-left: 19px; }
.periods .all svg { margin-left: 8px; }
.gear { margin-left: 29px; }

.mabar { height: 53px; display: flex; align-items: center; padding-left: 16px; }
.chipbtn { width: 92px; height: 40px; border: 2px solid #e2e4e8; border-radius: 7px; background: #f7f8fa; display: flex; align-items: center; justify-content: center; font-size: 30px; line-height: 34px; padding-bottom: 2px; color: #222; gap: 3px; }
.malegend { margin-left: 10px; }
.dk { position: relative; margin-left: 243px; width: 107px; height: 39px; background: #e95504; border-radius: 6px; color: #ffefe4; font-size: 31px; line-height: 37px; padding-left: 11px; white-space: nowrap; }
.dk i { position: absolute; right: 5px; bottom: 5px; border-left: 9px solid transparent; border-bottom: 9px solid #fff; }
.adj { margin-left: 39px; width: 113px; }

.charts { display: flex; height: 1005px; }
.left { margin-left: 12px; width: 736px; }
.wm { fill: #f6f6f6; }
.up { stroke: #b93030; stroke-width: 2; }
.down { stroke: #0b920b; stroke-width: 2; }
.up .solid { fill: #cb2f2f; stroke: #cb2f2f; }
.down .solid { fill: #009e00; stroke: #009e00; }
.volhead { height: 53px; display: flex; align-items: center; padding-left: 5px; }
.vol { width: 126px; gap: 10px; margin-right: 2px; }
.next { margin-left: auto; width: 37px; height: 51px; background: #999; border-radius: 9px 0 0 9px; display: flex; align-items: center; justify-content: center; }

.right { margin-left: 15px; width: 292px; }
.legend { display: flex; align-items: center; height: 50px; font-size: 24.5px; color: #666; }
.legend i { width: 13px; height: 13px; margin: 4px 9px 0 1px; }
.legend .g { background: #5cb64a; }
.legend .r { background: #e64a4a; margin-left: 38px; }
.info { display: flex; justify-content: space-between; align-items: center; height: 38px; font-size: 25px; line-height: 34px; color: #666; padding: 0 1px 0 2px; }
.info b { font-size: 25.5px; font-weight: 500; color: #2c2c2c; -webkit-text-stroke: .5px #2c2c2c; letter-spacing: -.4px; }
.info .date { letter-spacing: .3px; }
.info span { display: flex; align-items: center; padding-bottom: 1px; }
.info i { width: 26px; height: 26px; border-radius: 50%; background: #c8c8c8; color: #fff; font: 700 20px/26px Roboto; text-align: center; margin: 1px 0 0 10px; }
.seg { margin: 6px 2px 6px 1px; height: 61px; border-radius: 6px; background: #f7f8fb; display: flex; align-items: center; padding: 5px; font-size: 27.3px; color: #666; white-space: nowrap; }
.seg b { width: 139px; height: 51px; line-height: 50px; background: #fff; border-radius: 6px; text-align: center; color: #2c2c2c; font-size: 28.3px; letter-spacing: -.2px; }
.seg span { flex: 1; text-align: center; padding-bottom: 2px; letter-spacing: -.2px; }

.banner { margin: 16px 15px 14px; height: 77px; border-radius: 38px; background: #fceee6; display: flex; align-items: center; padding: 0 31px 0 26px; color: #d95a18; font-size: 33.3px; }
.banner span { margin-left: 44px; flex: 1; white-space: nowrap; padding-bottom: 5px; }
.banner i { width: 2px; height: 30px; background: #e8935f; margin-right: 13px; }

.sections { height: 90px; border-top: 2px solid #d8d8d8; border-bottom: 2px solid #d8d8d8; display: flex; padding-left: 34px; }
.sections .tab { width: 144.6px; padding-bottom: 3px; }

.cards { height: 243px; padding: 9px 0 0 32px; display: flex; gap: 17px; }
.card { position: relative; width: 458px; height: 204px; border-radius: 24px; background: linear-gradient(#fef5f3, #fff9f7 45%, #fffdfc); padding: 25px 20px 0 19px; overflow: hidden; }
.card > * { position: relative; }
.card .deco { position: absolute; left: 0; top: 0; }
h3 { margin: 0; height: 44px; display: flex; align-items: center; font-size: 35.4px; line-height: 44px; font-weight: 700; color: #2c2c2c; }
h3 svg:first-child { margin-right: 11px; }
.chev { margin-left: 12px; }
p { margin: 7px 0 0; height: 50px; display: flex; align-items: center; font-size: 30.8px; color: #666; white-space: nowrap; }
p b { color: #d6451a; font-weight: 700; font-size: 34px; }
.second { margin-top: 1px; }
.second svg { margin-left: 1px; }
.gap { margin: 0 5px 0 3px; letter-spacing: -1px; }
.pill { margin: 17px 0 0 0; width: 418px; height: 87px; border: 5px solid #fff; border-radius: 44px; display: flex; overflow: hidden; background: #fff; }
.half { height: 77px; display: flex; align-items: center; flex: 1; }
.half i { width: 62px; height: 62px; border-radius: 50%; background: #fff; display: flex; align-items: center; justify-content: center; }
.half div { display: flex; flex-direction: column; margin-top: -4px; }
.half span { font-size: 30px; line-height: 37px; }
.half small { font-size: 26px; line-height: 30px; }
.bull { background: #fcdcd9; color: #de4a1e; padding-left: 12px; gap: 21px; clip-path: polygon(0 0, 100% 0, 98% 100%, 0 100%); }
.bear { background: #d6eedc; color: #3bab5e; justify-content: flex-end; padding-right: 11px; gap: 16px; clip-path: polygon(2% 0, 100% 0, 100% 100%, 0 100%); }

.dock { height: 117px; border-top: 2px solid #d4d6da; background: #f7f8fa; display: flex; color: #666; font-size: 30px; }
.index { width: 235px; display: flex; flex-direction: column; align-items: center; padding-top: 7px; }
.index strong { font-weight: 400; font-size: 33.5px; line-height: 40px; margin-top: 8px; color: #d83030; }
.index div { display: flex; width: 100%; padding: 0 9px 0 35px; justify-content: space-between; line-height: 40px; margin-top: 2px; }
.index em { font-style: normal; font-size: 32.5px; color: #d83030; }
.item { width: 211px; display: flex; flex-direction: column; align-items: center; padding-top: 6px; line-height: 40px; }
.item svg { height: 52px; margin-bottom: 11px; }

.sysnav { height: 116px; background: #fcfcfc; display: flex; justify-content: center; padding-top: 25px; }
</style>
